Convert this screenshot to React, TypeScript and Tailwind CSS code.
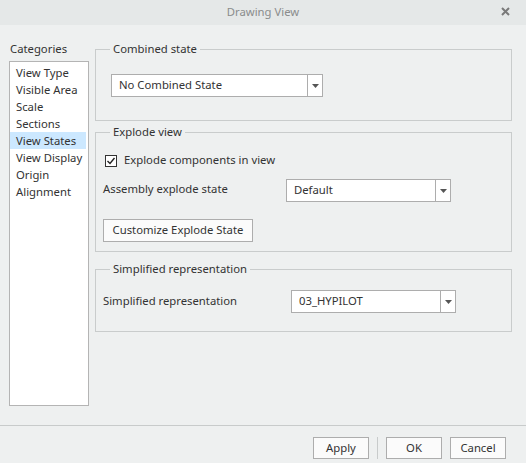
import React from "react";

const font = { fontFamily: '"Noto Sans", "Open Sans", sans-serif' };

function Arrow() {
  return (
    <svg width="7" height="4" viewBox="0 0 7 4">
      <path d="M0 0 L7 0 L3.5 4 Z" fill="#555" />
    </svg>
  );
}

function Combo({ value, width }: { value: string; width: number }) {
  return (
    <div
      className="flex h-[23px] border border-[#adadad] bg-white"
      style={{ width }}
    >
      <div className="flex flex-1 items-center whitespace-nowrap pl-[7px] text-[11.3px] text-[#333]">{value}</div>
      <div className="flex w-[15px] items-center justify-center border-l border-[#adadad]">
        <Arrow />
      </div>
    </div>
  );
}

export default function App() {
  const items = [
    "View Type",
    "Visible Area",
    "Scale",
    "Sections",
    "View States",
    "View Display",
    "Origin",
    "Alignment",
  ];
  return (
    <div
      className="flex h-[463px] w-[526px] flex-col overflow-hidden bg-[#eef0f0] text-[11.3px] text-[#333]"
      style={font}
    >
      {/* title bar */}
      <div className="relative flex h-[25px] items-center justify-center bg-[#e5e8e8]">
        <span className="text-[11.3px] text-[#8a8c8c]">Drawing View</span>
        <svg
          className="absolute right-[16px] top-[7px]"
          width="9"
          height="9"
          viewBox="0 0 9 9"
        >
          <path d="M1 1 L8 8 M8 1 L1 8" stroke="#7a7a7a" strokeWidth="2" />
        </svg>
      </div>

      {/* body */}
      <div className="flex flex-1 pl-[9px]">
        {/* categories */}
        <div className="flex w-[80px] flex-col pt-[16px] pb-[19px]">
          <div className="h-[20px] whitespace-nowrap pl-[1px] leading-[16px]">Categories</div>
          <div className="flex-1 border border-[#b4b4b4] bg-white pt-[2px]">
            {items.map((it) => (
              <div
                key={it}
                className={
                  "mr-[2px] h-[17px] whitespace-nowrap pl-[6px] leading-[17px] " +
                  (it === "View States" ? "bg-[#cce8ff]" : "")
                }
              >
                {it}
              </div>
            ))}
          </div>
        </div>

        {/* right column */}
        <div className="ml-[6px] flex w-[417px] flex-col pt-[16px]">
          <fieldset className="border border-[#c9cccc] pl-[7px] pt-[17px] pb-[23px]">
            <legend className="ml-[7px] whitespace-nowrap px-[3px] leading-[16px]">
              Combined state
            </legend>
            <div className="ml-[8px]">
              <Combo value="No Combined State" width={212} />
            </div>
          </fieldset>

          <fieldset className="mt-[3px] border border-[#c9cccc] pl-[7px] pt-[12px] pb-[9px]">
            <legend className="ml-[7px] whitespace-nowrap px-[3px] leading-[16px]">
              Explode view
            </legend>
            <div className="flex h-[17px] items-center">
              <div className="ml-[2px] flex h-[12px] w-[12px] items-center justify-center border border-[#333] bg-white">
                <svg width="10" height="10" viewBox="0 0 10 10">
                  <path
                    d="M1.5 5 L4 7.5 L8.5 2"
                    stroke="#222"
                    strokeWidth="1.4"
                    fill="none"
                  />
                </svg>
              </div>
              <span className="ml-[7px] whitespace-nowrap">Explode components in view</span>
            </div>
            <div className="mt-[10px] flex items-center">
              <div className="-mt-[2px] w-[183px] whitespace-nowrap">Assembly explode state</div>
              <Combo value="Default" width={165} />
            </div>
            <button className="mt-[17px] flex h-[23px] w-[150px] items-center justify-center whitespace-nowrap border border-[#adadad] bg-[#fbfbfb] text-[11.3px] text-[#333]">
              Customize Explode State
            </button>
          </fieldset>

          <fieldset className="mt-[9px] border border-[#c9cccc] pl-[7px] pt-[13px] pb-[18px]">
            <legend className="ml-[7px] whitespace-nowrap px-[3px] leading-[16px]">
              Simplified representation
            </legend>
            <div className="flex items-center">
              <div className="w-[188px] whitespace-nowrap">Simplified representation</div>
              <Combo value="03_HYPILOT" width={165} />
            </div>
          </fieldset>
        </div>
      </div>

      {/* footer */}
      <div className="flex h-[38px] items-start justify-end border-t border-[#c8cbcb] pt-[11px] pr-[20px]">
        <button className="h-[22px] w-[56px] border border-[#adadad] bg-[#fbfbfb] text-[11.3px] text-[#333]">
          Apply
        </button>
        <div className="mx-[8px] h-[22px] w-px bg-[#c8cbcb]" />
        <button className="h-[22px] w-[56px] border border-[#adadad] bg-[#fbfbfb] text-[11.3px] text-[#333]">
          OK
        </button>
        <button className="ml-[8px] h-[22px] w-[56px] border border-[#adadad] bg-[#fbfbfb] text-[11.3px] text-[#333]">
          Cancel
        </button>
      </div>
    </div>
  );
}
